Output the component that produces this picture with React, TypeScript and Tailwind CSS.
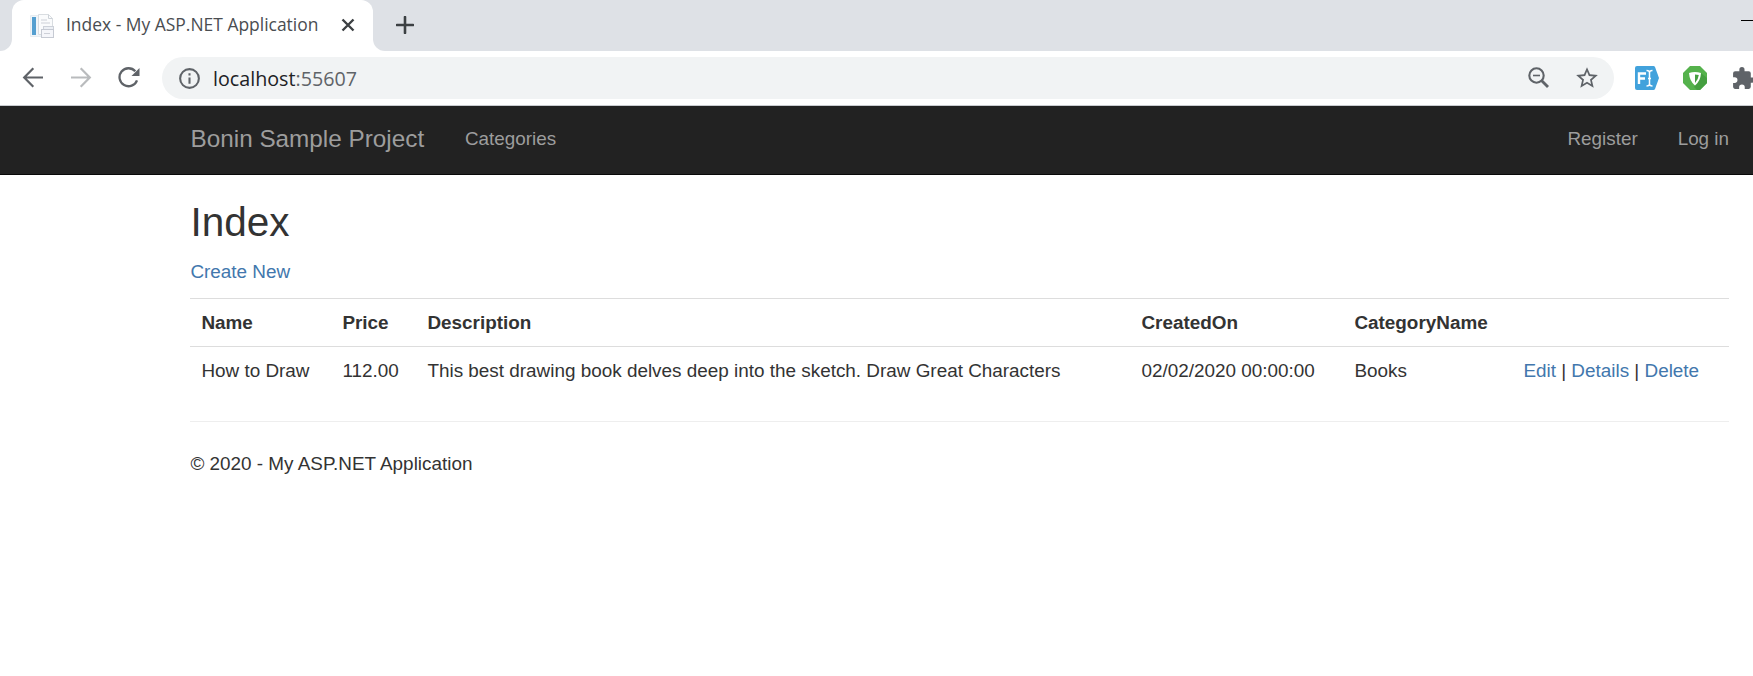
import React from "react";

const columns = [
  { title: "Name", width: "w-[141px]" },
  { title: "Price", width: "w-[85px]" },
  { title: "Description", width: "w-[714px]" },
  { title: "CreatedOn", width: "w-[213px]" },
  { title: "CategoryName", width: "w-[169px]" },
  { title: "", width: "w-[217px]" },
];

function Favicon() {
  return (
    <svg width="24" height="24" viewBox="0 0 24 24" className="shrink-0">
      <path d="M.5 1.500h16v21H.5z" fill="#f0f5f9" stroke="#e6ecf1" />
      <rect x="2" y="3" width="4" height="18" fill="#559fd0" />
      <path d="M8.500.5h10l4 4v16h-14z" fill="#fafbfc" stroke="#d9dde1" />
      <path d="M18.500.5v4h4" fill="none" stroke="#cdd2d8" />
      <path d="M11 6h6M11 9h9" stroke="#dde0e4" strokeWidth="1.500" />
      <rect x="13.500" y="12.500" width="10" height="6" fill="#eceff4" stroke="#cdd1d9" />
      <rect x="11.500" y="15.500" width="12" height="8" fill="#f5f6fa" stroke="#c6cad3" />
      <path d="M14 19.500h6" stroke="#cdd0d8" />
    </svg>
  );
}

function TabStrip() {
  return (
    <div className="flex h-[51px] bg-[#dee1e6]">
      <div className="h-[51px] w-3 bg-white">
        <div className="h-full w-full rounded-br-xl bg-[#dee1e6]" />
      </div>
      <div className="flex h-[51px] w-[361px] items-center rounded-t-xl bg-white pl-[18px]">
        <Favicon />
        <span className="ml-3 w-[253px] whitespace-nowrap pb-[3px] font-['Open_Sans',sans-serif] text-[17.45px] leading-[47px] text-[#4a4d51]">
          Index - My ASP.NET Application
        </span>
        <svg width="14" height="14" viewBox="0 0 14 14" className="ml-[22px] mb-px">
          <path d="M1.500 1.500l11 11M12.500 1.500l-11 11" stroke="#3c4043" strokeWidth="2.400" />
        </svg>
      </div>
      <div className="h-[51px] w-3 bg-white">
        <div className="h-full w-full rounded-bl-xl bg-[#dee1e6]" />
      </div>
      <svg width="18" height="18" viewBox="0 0 18 18" className="ml-[11px] mt-4">
        <path d="M9 1v16M1 9h16" stroke="#3c4043" strokeWidth="2.600" strokeLinecap="round" />
      </svg>
      <svg width="12" height="2" viewBox="0 0 12 2" className="ml-auto mt-5">
        <path d="M0 .5h12" stroke="#000" />
      </svg>
    </div>
  );
}

function Toolbar() {
  return (
    <div className="flex h-[55px] items-center overflow-hidden border-b border-[#c9ccd0] bg-white pl-[22px]">
      <svg width="22" height="22" viewBox="0 0 22 22" fill="none" stroke="#5f6368" strokeWidth="2.200" className="shrink-0">
        <path d="M21 10.500H2.500M11.300 1.300L2.200 10.500l9.100 9.200" />
      </svg>
      <svg width="22" height="22" viewBox="0 0 22 22" fill="none" stroke="#b9bbbd" strokeWidth="2.200" className="ml-[26px] shrink-0">
        <path d="M1 10.500h18.500M10.700 1.300l9.100 9.200-9.100 9.200" />
      </svg>
      <svg width="22" height="22" viewBox="0 0 22 22" className="ml-[26px] shrink-0">
        <path d="M17.300 4.300A9 9 0 1 0 19 13.300" fill="none" stroke="#5f6368" strokeWidth="2.300" />
        <path d="M21.500 1v8h-8z" fill="#5f6368" />
      </svg>
      <div className="ml-[22px] flex h-[42px] w-[1452px] shrink-0 items-center rounded-full bg-[#f1f3f4] pl-[15px] pr-[14px]">
        <svg width="25" height="25" viewBox="0 0 24 24" fill="#5f6368">
          <path d="M11 7h2v2h-2zm0 4h2v6h-2zm1-9a10 10 0 1 0 0 20 10 10 0 0 0 0-20zm0 18a8 8 0 1 1 0-16 8 8 0 0 1 0 16z" />
        </svg>
        <span className="ml-[11px] pt-px font-['Open_Sans',sans-serif] text-[19.7px] leading-10 text-[#5f6368]">
          <span className="text-[#202124]">localhost</span>:55607
        </span>
        <svg width="22" height="22" viewBox="0 0 22 22" fill="none" stroke="#5f6368" className="ml-auto">
          <circle cx="8.500" cy="8.500" r="7.200" strokeWidth="2.100" />
          <path d="M5 8.500h7" strokeWidth="1.600" />
          <path d="M13.500 13.500l6.500 6.500" strokeWidth="2.800" />
        </svg>
        <svg width="26" height="26" viewBox="0 0 24 24" fill="#5f6368" className="ml-[24px]">
          <path d="M22 9.240l-7.190-.620L12 2 9.190 8.630 2 9.240l5.460 4.730L5.820 21 12 17.270 18.180 21l-1.630-7.030zM12 15.400l-3.760 2.270 1-4.280-3.320-2.880 4.380-.380L12 6.100l1.710 4.040 4.380.380-3.320 2.880 1 4.280z" />
        </svg>
      </div>
      <svg width="24" height="24" viewBox="0 0 24 24" className="ml-[21px] shrink-0">
        <path d="M2 0h16.500q1 0 1.500 1l4 11-4 11q-.5 1-1.500 1H2q-2 0-2-2V2q0-2 2-2z" fill="#42a2dc" />
        <path d="M4 18V7.500h7M4 12.500h6" fill="none" stroke="#fff" strokeWidth="2.400" />
        <path d="M11.500 4.500q3 0 3 2v11.500q0 2-3 2M17.500 4.500q-3 0-3 2M14.500 18q0 2 3 2M13 12.500h3" fill="none" stroke="#fff" strokeWidth="1.500" />
      </svg>
      <svg width="24" height="24" viewBox="0 0 24 24" className="ml-6 shrink-0">
        <path d="M7 0h10l7 7v10l-7 7H7l-7-7V7z" fill="#55b24c" />
        <path d="M18 7l6 5v5l-7 7H14l-3-3z" fill="#459f40" />
        <path d="M6 7q6-2 12 0-.5 8-6 12.500Q6.500 15 6 7z" fill="#fff" />
        <path d="M12 8.500q2 0 3.800.4-.5 4.500-3.800 8z" fill="#459f40" />
      </svg>
      <svg width="25" height="25" viewBox="0 0 24 24" fill="#5f6368" className="ml-6 shrink-0">
        <path d="M20.500 11H19V7a2 2 0 0 0-2-2h-4V3.500a2.500 2.500 0 0 0-5 0V5H4a2 2 0 0 0-2 2v3.800h1.500a2.700 2.700 0 0 1 0 5.400H2V20c0 1.100.9 2 2 2h3.800v-1.500a2.700 2.700 0 0 1 5.400 0V22H17a2 2 0 0 0 2-2v-4h1.500a2.500 2.500 0 0 0 0-5z" />
      </svg>
    </div>
  );
}

function NavBar() {
  return (
    <nav className="flex h-[69px] items-start border-b border-[#080808] bg-[#222222] pl-[190.5px] pr-6 text-[18.85px] leading-[65px] text-[#9d9d9d]">
      <a className="w-[274.5px] whitespace-nowrap text-[24.3px]">Bonin Sample Project</a>
      <a>Categories</a>
      <a className="ml-auto">Register</a>
      <a className="ml-10">Log in</a>
    </nav>
  );
}

function ProductTable() {
  return (
    <table className="w-[1539px] table-fixed border-collapse text-left">
      <thead>
        <tr className="h-12 border-y border-[#dddddd]">
          {columns.map((column, i) => (
            <th key={i} className={`${column.width} whitespace-nowrap p-0 pl-[11px] font-bold`}>
              {column.title}
            </th>
          ))}
        </tr>
      </thead>
      <tbody>
        <tr className="h-12 whitespace-nowrap">
          <td className="pl-[11px]">How to Draw</td>
          <td className="pl-[11px]">112.00</td>
          <td className="pl-[11px]">This best drawing book delves deep into the sketch. Draw Great Characters</td>
          <td className="pl-[11px]">02/02/2020 00:00:00</td>
          <td className="pl-[11px]">Books</td>
          <td className="pl-[11px]">
            <a className="text-[#4277ad]">Edit</a> | <a className="text-[#4277ad]">Details</a> |{" "}
            <a className="text-[#4277ad]">Delete</a>
          </td>
        </tr>
      </tbody>
    </table>
  );
}

export default function App() {
  return (
    <div className="h-[676px] w-[1753px] overflow-hidden bg-white font-['Liberation_Sans',Arial,sans-serif] text-[18.9px] leading-[26px] text-[#333333]">
      <TabStrip />
      <Toolbar />
      <NavBar />
      <main className="pl-[190.4px]">
        <h2 className="pt-[25px] text-[40.5px] leading-[44px]">Index</h2>
        <p className="mt-[15px] text-[#4277ad]">Create New</p>
        <div className="mt-[13px]">
          <ProductTable />
        </div>
        <hr className="mt-[26px] w-[1539px] border-[#eeeeee]" />
        <footer className="mt-[29px]">© 2020 - My ASP.NET Application</footer>
      </main>
    </div>
  );
}
